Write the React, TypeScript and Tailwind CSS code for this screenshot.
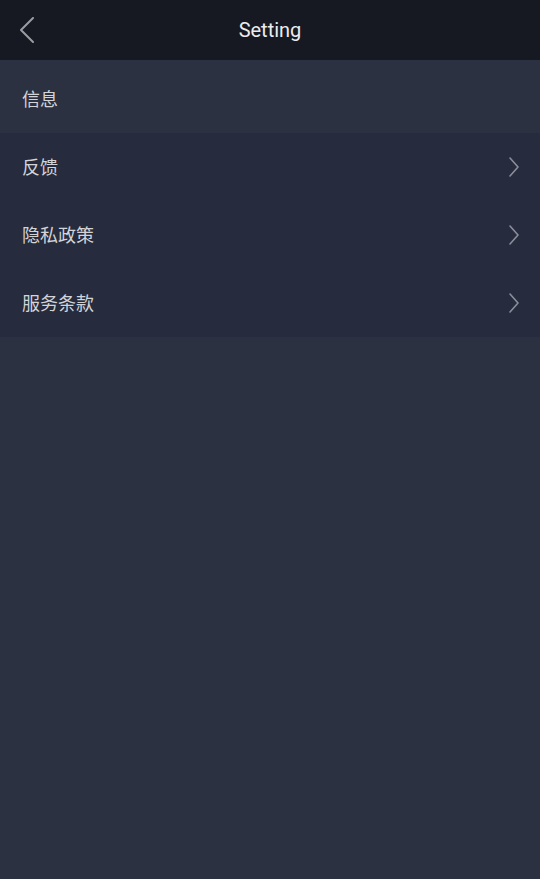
const rows = ["反馈", "隐私政策", "服务条款"];

function Chevron({ className }: { className?: string }) {
  return (
    <svg viewBox="0 0 10 20" className={className} fill="none" stroke="currentColor" strokeWidth="1.6" strokeLinecap="round" strokeLinejoin="round">
      <path d="M1 1l8 9-8 9" />
    </svg>
  );
}

export default function App() {
  return (
    <div
      className="flex min-h-[879px] w-[540px] flex-col bg-[#2c3142]"
      style={{ fontFamily: '"Roboto", "Noto Sans CJK SC", sans-serif' }}
    >
      <header className="relative flex h-[60px] items-center justify-center bg-[#161922]">
        <button className="absolute left-[20px] top-[17px] text-[#9b9ca2]">
          <svg viewBox="0 0 14 26" className="h-[26px] w-[14px]" fill="none" stroke="currentColor" strokeWidth="2" strokeLinecap="round" strokeLinejoin="round">
            <path d="M13 1L1 13l12 12" />
          </svg>
        </button>
        <h1 className="text-[20px] text-[#ececee]">Setting</h1>
      </header>

      <div className="flex h-[73px] items-center px-[22px] pt-[5px] text-[18px] text-[#d3d4d8]">信息</div>

      <div className="bg-[#262b3d]">
        {rows.map((label) => (
          <div key={label} className="flex h-[68px] items-center justify-between pl-[22px] pr-[21px]">
            <span className="text-[18px] text-[#d3d4d8]">{label}</span>
            <Chevron className="h-[20px] w-[10px] text-[#8b8e9a]" />
          </div>
        ))}
      </div>
    </div>
  );
}
